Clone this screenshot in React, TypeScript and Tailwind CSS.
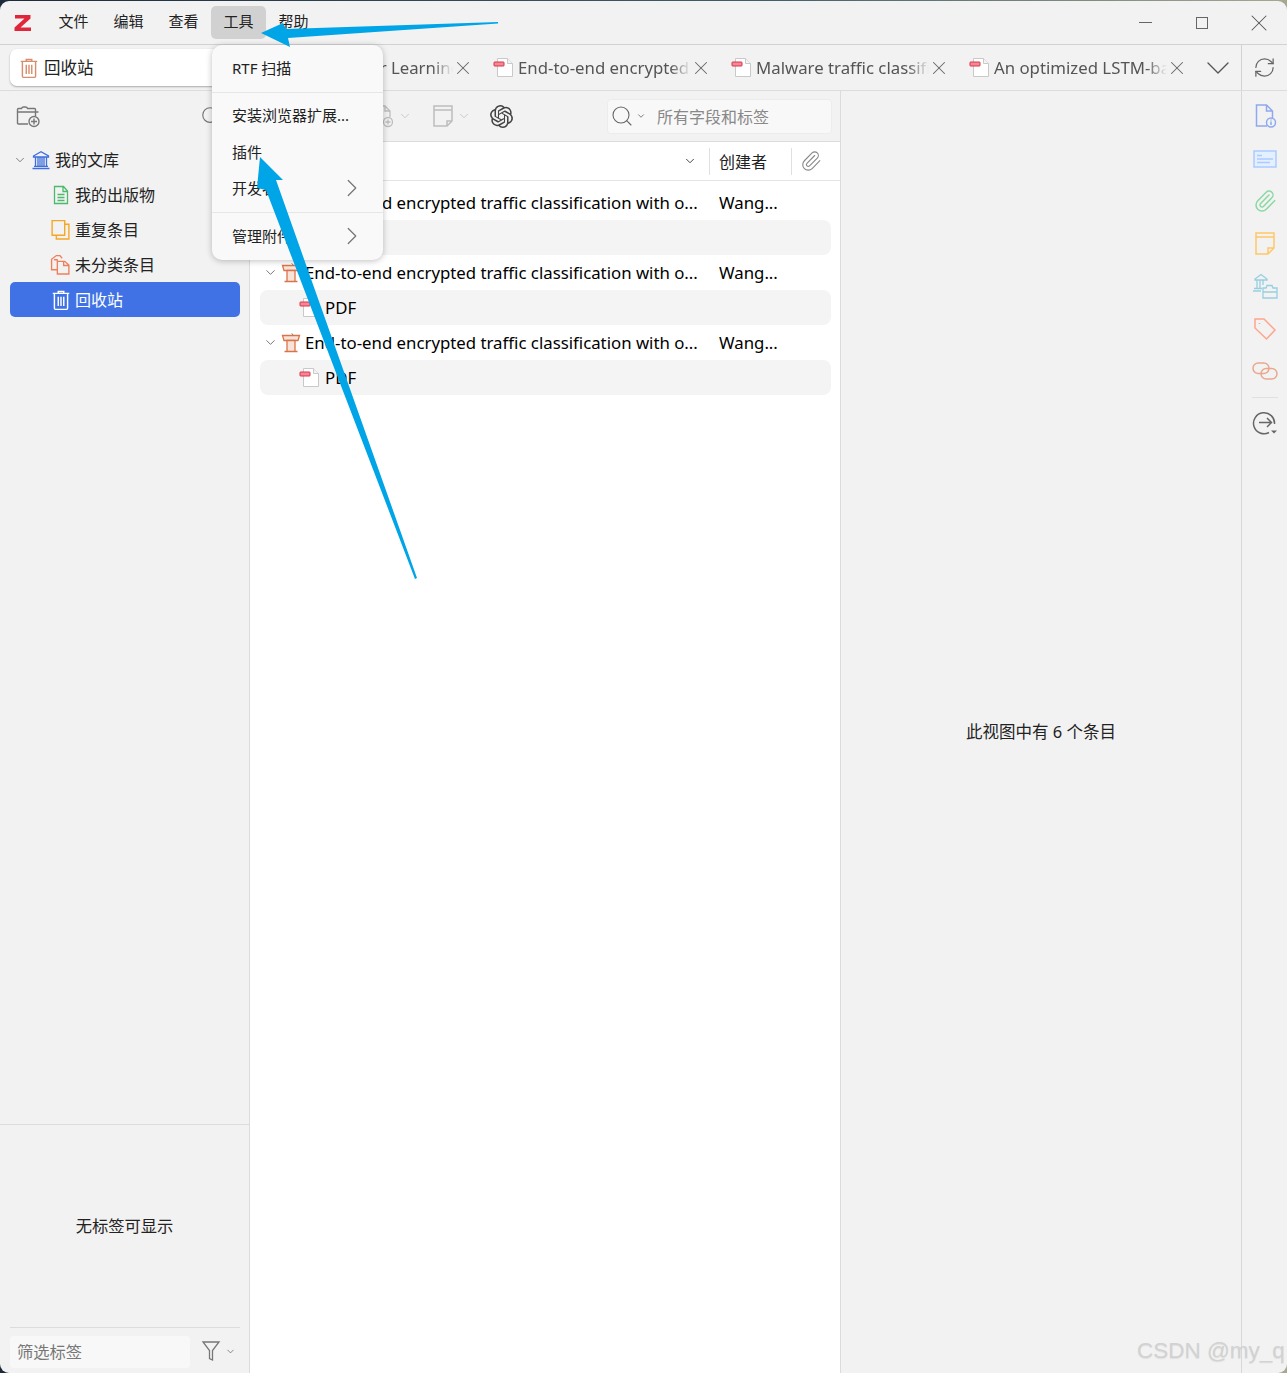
import { FC, ReactNode } from "react";
import { ChevronDown, ChevronRight, Paperclip, RefreshCw, Search, X } from "lucide-react";
import { SiOpenai } from "react-icons/si";

type IconProps = { className?: string; size?: number };

const Svg: FC<IconProps & { children: ReactNode }> = ({ className, size = 20, children }) => (
  <svg width={size} height={size} viewBox="0 0 20 20" fill="none" stroke="currentColor" strokeWidth="1.300" className={className}>
    {children}
  </svg>
);

const TrashIcon: FC<IconProps> = ({ className, size }) => (
  <Svg className={className} size={size}>
    <path d="M2.500 4h15M7.500 4V2.200h5V4M4 4v13.500q0 1 1 1h10q1 0 1-1V4M7.500 7v8.500M10 7v8.500M12.500 7v8.500" />
  </Svg>
);

const LibraryIcon: FC<IconProps> = ({ className }) => (
  <Svg className={className}>
    <path d="M2.500 6 10 1.800 17.500 6v1h-15zM4.500 7v9M7 7v9M9 7v9M11 7v9M13 7v9M15.500 7v9M3 16.300h14M1.500 18.500h17" />
  </Svg>
);

const PublicationIcon: FC<IconProps> = ({ className, size }) => (
  <Svg className={className} size={size}>
    <path d="M3.500 1.500h9l4 4.500v12.500h-13zM12 1.500V6.500h4.500M6.500 9.500h7M6.500 12.500h7M6.500 15.500h7" />
  </Svg>
);

const DuplicateIcon: FC<IconProps> = ({ className, size }) => (
  <Svg className={className} size={size}>
    <path d="M2 1.500h12v14H2zM14 5h4v14H6v-3.500" />
  </Svg>
);

const UnfiledIcon: FC<IconProps> = ({ className, size }) => (
  <Svg className={className} size={size}>
    <path d="M7 15H1.500V5L6 1.500h3.500l2 2.500M7 7h7l4 3.500v8.500H7zM13 7v4h5M7 7l-.2-1.500h-3" />
  </Svg>
);

const PdfIcon: FC<IconProps> = ({ className }) => (
  <svg width="21" height="21" viewBox="0 0 21 21" fill="none" className={className}>
    <path d="M4.500 1.500h10l5 5v13h-15z" fill="#fff" stroke="#c9c9c9" />
    <path d="M14.500 1.500v5h5" fill="#f4f4f4" stroke="#c9c9c9" />
    <rect x="1" y="5" width="10" height="4" rx=".5" fill="#f08a96" stroke="#df3347" />
  </svg>
);

const LecternIcon: FC<IconProps> = ({ className }) => (
  <svg width="20" height="20" viewBox="0 0 20 20" fill="#f8e3d8" stroke="#d9744a" strokeWidth="1.300" className={className}>
    <path d="M1.500 2.500h17l-1.500 5H3z" />
    <path d="M6 7.500h8v11H6zM3.500 18.500h13" />
    <path d="M12.500 2.200 10.500 .3" stroke="#777" strokeWidth="1" />
  </svg>
);

const NewCollectionIcon = () => (
  <svg width="26" height="26" viewBox="0 0 26 26" fill="none" stroke="#777" strokeWidth="1.400">
    <path d="M13 21H3.500q-1 0-1-1V6.500q0-1 1-1h3q.5-1.500 2-1.500h2q1.500 0 2 1.500h7q1 0 1 1V13M2.500 9h21" />
    <circle cx="19" cy="18.500" r="5" fill="#f2f2f2" />
    <path d="M19 15.500v6M16 18.500h6" />
  </svg>
);

const NewNoteIcon = () => (
  <svg width="22" height="24" viewBox="0 0 22 24" fill="none" stroke="#bdbdbd" strokeWidth="1.500">
    <path d="M2 2h18v15l-5 5H2zM2 6h18M20 17h-5v5" />
  </svg>
);

const AddItemIcon = () => (
  <svg width="22" height="24" viewBox="0 0 22 24" fill="none" stroke="#bdbdbd" strokeWidth="1.300">
    <path d="M8 19H2V2h8l5 5v6M10 2v5h5" />
    <circle cx="13" cy="18" r="4.500" fill="#f2f2f2" />
    <path d="M13 15.500v5M10.500 18h5" />
  </svg>
);

const FilterIcon = () => (
  <svg width="20" height="22" viewBox="0 0 20 22" fill="none" stroke="#777" strokeWidth="1.300">
    <path d="M2 2h16l-6.500 8.500V20l-3-1.500v-8z" />
  </svg>
);

const InfoIcon = () => (
  <svg width="24" height="24" viewBox="0 0 24 24" fill="none" stroke="#8fa9ef" strokeWidth="1.500">
    <path d="M14 22H3.500V1h10l6 6v7M13.500 1v6h6" />
    <circle cx="18" cy="18.500" r="4.500" fill="#f2f2f2" />
    <path d="M18 17.500v3.500M18 15.500v1" />
  </svg>
);

const AbstractIcon = () => (
  <svg width="24" height="20" viewBox="0 0 24 20" fill="#e4efff" stroke="#aaccff" strokeWidth="1.500">
    <path d="M1 2h22v16H1zM4 6.500h5M4 10h16M4 13.500h13" />
  </svg>
);

const NotesIcon = () => (
  <svg width="22" height="24" viewBox="0 0 22 24" fill="none" stroke="#ffc766" strokeWidth="1.500">
    <path d="M2 1h18v15l-6 6H2zM2 5h18M20 16h-6v6" />
  </svg>
);

const LibrariesIcon = () => (
  <svg width="26" height="26" viewBox="0 0 26 26" fill="none" stroke="#96cfe0" strokeWidth="1.300">
    <path d="M3 6 9 1.500 15 6v1H3zM5 7v8M8 7v8M11 7v5M2 15.500h8M1 18h8" />
    <path d="M11 15h3l1-2.500h5l1 2.500h4v10H11zM11 19h14" />
  </svg>
);

const TagIcon = () => (
  <svg width="24" height="24" viewBox="0 0 24 24" fill="none" stroke="#ffa58c" strokeWidth="1.500">
    <path d="M2 2h9l11 11-8.500 9L2 11zM6.500 6v1" />
  </svg>
);

const LinkIcon = () => (
  <svg width="26" height="18" viewBox="0 0 26 18" fill="none" stroke="#e8a98e" strokeWidth="1.500">
    <rect x="1" y="1" width="16" height="10.500" rx="5.250" />
    <rect x="9" y="6.500" width="16" height="10.500" rx="5.250" />
  </svg>
);

const LocateIcon = () => (
  <svg width="26" height="26" viewBox="0 0 26 26" fill="none" stroke="#666" strokeWidth="1.500">
    <path d="M22.500 14A10.500 10.500 0 1 0 17 22.500M7 12.500h12M15 8l4.500 4.500-4.500 4.500" />
    <path d="m19 20.500h6l-3 3z" fill="#666" stroke="none" />
  </svg>
);

const Tab: FC<{ title: string }> = ({ title }) => (
  <div className="flex w-[238px] shrink-0 items-center pl-[2px]">
    <PdfIcon className="shrink-0" />
    <span className="ml-[4px] w-[173px] overflow-hidden whitespace-nowrap text-[16.800px] text-[#555] [mask-image:linear-gradient(to_right,black_88%,transparent)]">
      {title}
    </span>
    <X size={22} strokeWidth={1.100} className="ml-[-1px] shrink-0 text-[#666]" />
  </div>
);

const TreeRow: FC<{ icon: ReactNode; label: string; selected?: boolean }> = ({ icon, label, selected }) => (
  <div className={`flex h-[35px] items-center rounded-[5px] pl-[38px] ${selected ? "bg-[#4072e5] text-white" : "text-[#222]"}`}>
    <span className="mr-[2px] flex w-[25px] shrink-0 justify-center">{icon}</span>
    <span className="text-[16px]">{label}</span>
  </div>
);

const ItemRow: FC = () => (
  <div className="flex h-[35px] items-center text-[16.800px] text-black">
    <ChevronDown size={15} strokeWidth={1.600} className="ml-[3px] text-[#777]" />
    <LecternIcon className="ml-[3px]" />
    <span className="ml-[4px] w-[414px] whitespace-nowrap">End-to-end encrypted traffic classification with o...</span>
    <span>Wang...</span>
  </div>
);

const AttachmentRow: FC = () => (
  <div className="flex h-[35px] items-center rounded-[8px] bg-[#f4f4f4] pl-[39px] text-[16.800px] text-black">
    <PdfIcon />
    <span className="ml-[5px]">PDF</span>
  </div>
);

const MenuItem: FC<{ label: string; sub?: boolean }> = ({ label, sub }) => (
  <div className="flex h-[36px] items-center justify-between pl-[20px] pr-[16px] text-[15px] text-[#222]">
    <span>{label}</span>
    {sub && <ChevronRight size={30} strokeWidth={1} className="text-[#777]" />}
  </div>
);

const MENU = ["文件", "编辑", "查看", "工具", "帮助"];

export default function App() {
  return (
    <div className="h-[1373px] w-[1287px] overflow-hidden bg-[linear-gradient(90deg,#1d2a3a,#40606a_60%,#a8a890)] pt-px font-['Noto_Sans','Noto_Sans_CJK_SC',sans-serif]">
      <div className="relative flex h-[1372px] flex-col overflow-hidden rounded-[9px] bg-[#f2f2f2]">
        {/* title bar */}
        <div className="flex h-[44px] shrink-0 items-center border-b border-[#d2d2d2]">
          <svg width="18" height="18" viewBox="0 0 18 18" className="ml-[14px]">
            <path d="M1 1h15.500v3.500L6.500 13.500H17V17H.5v-3.500L10.500 4.500H1z" fill="#e0263a" />
          </svg>
          <div className="ml-[14px] flex">
            {MENU.map((m) => (
              <div key={m} className={`flex h-[33px] w-[55px] items-center justify-center rounded-[5px] pb-[2px] text-[15px] text-[#222] ${m === "工具" ? "bg-[#d1d1d1]" : ""}`}>
                {m}
              </div>
            ))}
          </div>
          <div className="ml-auto flex items-center pr-[14px]">
            <div className="h-px w-[13px] bg-[#666]" />
            <div className="ml-[44px] h-[12px] w-[12px] border border-[#666]" />
            <X size={28} strokeWidth={0.900} className="ml-[37px] text-[#555]" />
          </div>
        </div>

        {/* tab bar */}
        <div className="flex h-[46px] shrink-0 items-center border-b border-[#dcdcdc] pl-[10px]">
          <div className="flex h-[37px] w-[241px] shrink-0 items-center gap-[4px] rounded-[7px] bg-white pl-[8px] text-[16.500px] text-[#222] shadow-[0_1px_2px_rgba(0,0,0,0.3)]">
            <TrashIcon size={22} className="text-[#d78e6e]" />
            <span className="pt-[2px]">回收站</span>
          </div>
          <div className="ml-[2px] flex">
            <Tab title="Data Transfer Learning Model" />
            <Tab title="End-to-end encrypted traffic classification" />
            <Tab title="Malware traffic classification using" />
            <Tab title="An optimized LSTM-based model" />
          </div>
          <ChevronDown size={40} strokeWidth={0.800} className="ml-[-7px] text-[#555]" />
          <div className="ml-auto flex h-full w-[46px] items-center justify-center border-l border-[#d2d2d2]">
            <RefreshCw size={23} strokeWidth={1.300} className="text-[#666]" />
          </div>
        </div>

        {/* body */}
        <div className="flex min-h-0 flex-1">
          {/* left pane */}
          <div className="flex w-[250px] shrink-0 flex-col border-r border-[#dcdcdc]">
            <div className="flex h-[50px] shrink-0 items-center justify-between pl-[15px] pr-[27px]">
              <NewCollectionIcon />
              <Search size={22} strokeWidth={1.300} className="text-[#777]" />
            </div>
            <div className="flex-1 pl-[10px] pr-[9px] pt-[1px]">
              <div className="flex h-[35px] items-center pl-[3px] text-[#222]">
                <ChevronDown size={14} strokeWidth={1.600} className="text-[#777]" />
                <LibraryIcon className="ml-[4px] text-[#3d6ee0]" />
                <span className="ml-[4px] text-[16px]">我的文库</span>
              </div>
              <TreeRow icon={<PublicationIcon className="text-[#4cba6c]" />} label="我的出版物" />
              <TreeRow icon={<DuplicateIcon size={21} className="text-[#f5a623]" />} label="重复条目" />
              <TreeRow icon={<UnfiledIcon size={21} className="text-[#f0805a]" />} label="未分类条目" />
              <TreeRow selected icon={<TrashIcon size={22} className="text-white" />} label="回收站" />
            </div>
            <div className="flex h-[203px] shrink-0 items-center justify-center border-t border-[#dcdcdc] text-[16.300px] text-[#222]">
              无标签可显示
            </div>
            <div className="ml-[10px] mr-[9px] flex h-[46px] shrink-0 items-start border-t border-[#dcdcdc] pt-[8px]">
              <div className="flex h-[32px] w-[180px] items-center rounded-[4px] bg-[#f8f8f8] pl-[7px] pt-[1px] text-[16.300px] text-[#777]">筛选标签</div>
              <span className="ml-[11px] mt-[4px]"><FilterIcon /></span>
              <ChevronDown size={11} strokeWidth={1.600} className="ml-[4px] mt-[10px] text-[#666]" />
            </div>
          </div>

          {/* items pane */}
          <div className="flex w-[591px] shrink-0 flex-col border-r border-[#dcdcdc] bg-white">
            <div className="flex h-[51px] shrink-0 items-center justify-end border-b border-[#dcdcdc] bg-[#f2f2f2] pr-[8px]">
              <AddItemIcon />
              <ChevronDown size={14} strokeWidth={1.300} className="ml-[1px] text-[#bdbdbd]" />
              <span className="ml-[20px]"><NewNoteIcon /></span>
              <ChevronDown size={14} strokeWidth={1.300} className="ml-[3px] text-[#bdbdbd]" />
              <SiOpenai size={23} className="ml-[19px] text-[#444]" />
              <div className="ml-[94px] flex h-[35px] w-[225px] items-center rounded-[4px] border border-[#ececec] bg-[#f8f8f8] pl-[2px] text-[16px] text-[#888]">
                <Search size={24} strokeWidth={1.100} className="text-[#666]" />
                <ChevronDown size={10} strokeWidth={1.800} className="ml-[2px] text-[#555]" />
                <span className="ml-[11px] pt-[2px]">所有字段和标签</span>
              </div>
            </div>
            <div className="flex h-[39px] shrink-0 items-center border-b border-[#e4e4e4] pl-[433px] text-[16px] text-[#222]">
              <ChevronDown size={14} strokeWidth={1.700} className="text-[#444]" />
              <div className="ml-[12px] h-[27px] w-px bg-[#e0e0e0]" />
              <span className="ml-[9px] w-[72px] pt-[2px]">创建者</span>
              <div className="h-[27px] w-px bg-[#e0e0e0]" />
              <Paperclip size={22} strokeWidth={1.200} className="ml-[8px] text-[#888]" />
            </div>
            <div className="pl-[10px] pr-[9px] pt-[4px]">
              <ItemRow />
              <AttachmentRow />
              <ItemRow />
              <AttachmentRow />
              <ItemRow />
              <AttachmentRow />
            </div>
          </div>

          {/* right pane */}
          <div className="flex flex-1 items-center justify-center text-[16.500px] text-[#222]">此视图中有 6 个条目</div>

          {/* side bar */}
          <div className="flex w-[46px] shrink-0 flex-col items-center border-l border-[#d8d8d8] pt-[4px] [&>div]:flex [&>div]:h-[42.500px] [&>div]:items-center">
            <div><InfoIcon /></div>
            <div><AbstractIcon /></div>
            <div><Paperclip size={24} strokeWidth={1.500} color="#8ad8a2" /></div>
            <div><NotesIcon /></div>
            <div><LibrariesIcon /></div>
            <div><TagIcon /></div>
            <div><LinkIcon /></div>
            <span className="mt-[4px] h-px w-[26px] bg-[#e0e0e0]" />
            <div className="mt-[4px]"><LocateIcon /></div>
          </div>
        </div>

        {/* tools menu */}
        <div className="absolute left-[212px] top-[44px] w-[171px] rounded-[10px] bg-[#f9f9f9] pb-[6px] pt-[5px] shadow-[0_1px_6px_rgba(0,0,0,0.25)]">
          <MenuItem label="RTF 扫描" />
          <div className="mb-[4px] mt-[6px] h-px bg-[#e6e6e6]" />
          <MenuItem label="安装浏览器扩展..." />
          <div className="mt-px">
            <MenuItem label="插件" />
            <MenuItem label="开发者" sub />
          </div>
          <div className="mb-[5px] mt-[6px] h-px bg-[#e6e6e6]" />
          <MenuItem label="管理附件" sub />
        </div>

        {/* annotation arrows */}
        <svg width="1287" height="1373" className="pointer-events-none absolute left-0 top-[-1px]">
          <polygon points="498,22 498,23.500 288,38 290,47 261,33 283,23 286,29" fill="#00a5e8" />
          <polygon points="260,157 283,180 276,180 417,578 415,579 266,190 257,188" fill="#00a5e8" />
        </svg>

        <span className="absolute left-[1137px] top-[1336px] font-['Liberation_Sans',sans-serif] text-[22.500px] leading-[28px] text-[#d2d2d2] [text-shadow:0_1px_1px_rgba(0,0,0,0.08)]">
          CSDN @my_q
        </span>
      </div>
    </div>
  );
}
